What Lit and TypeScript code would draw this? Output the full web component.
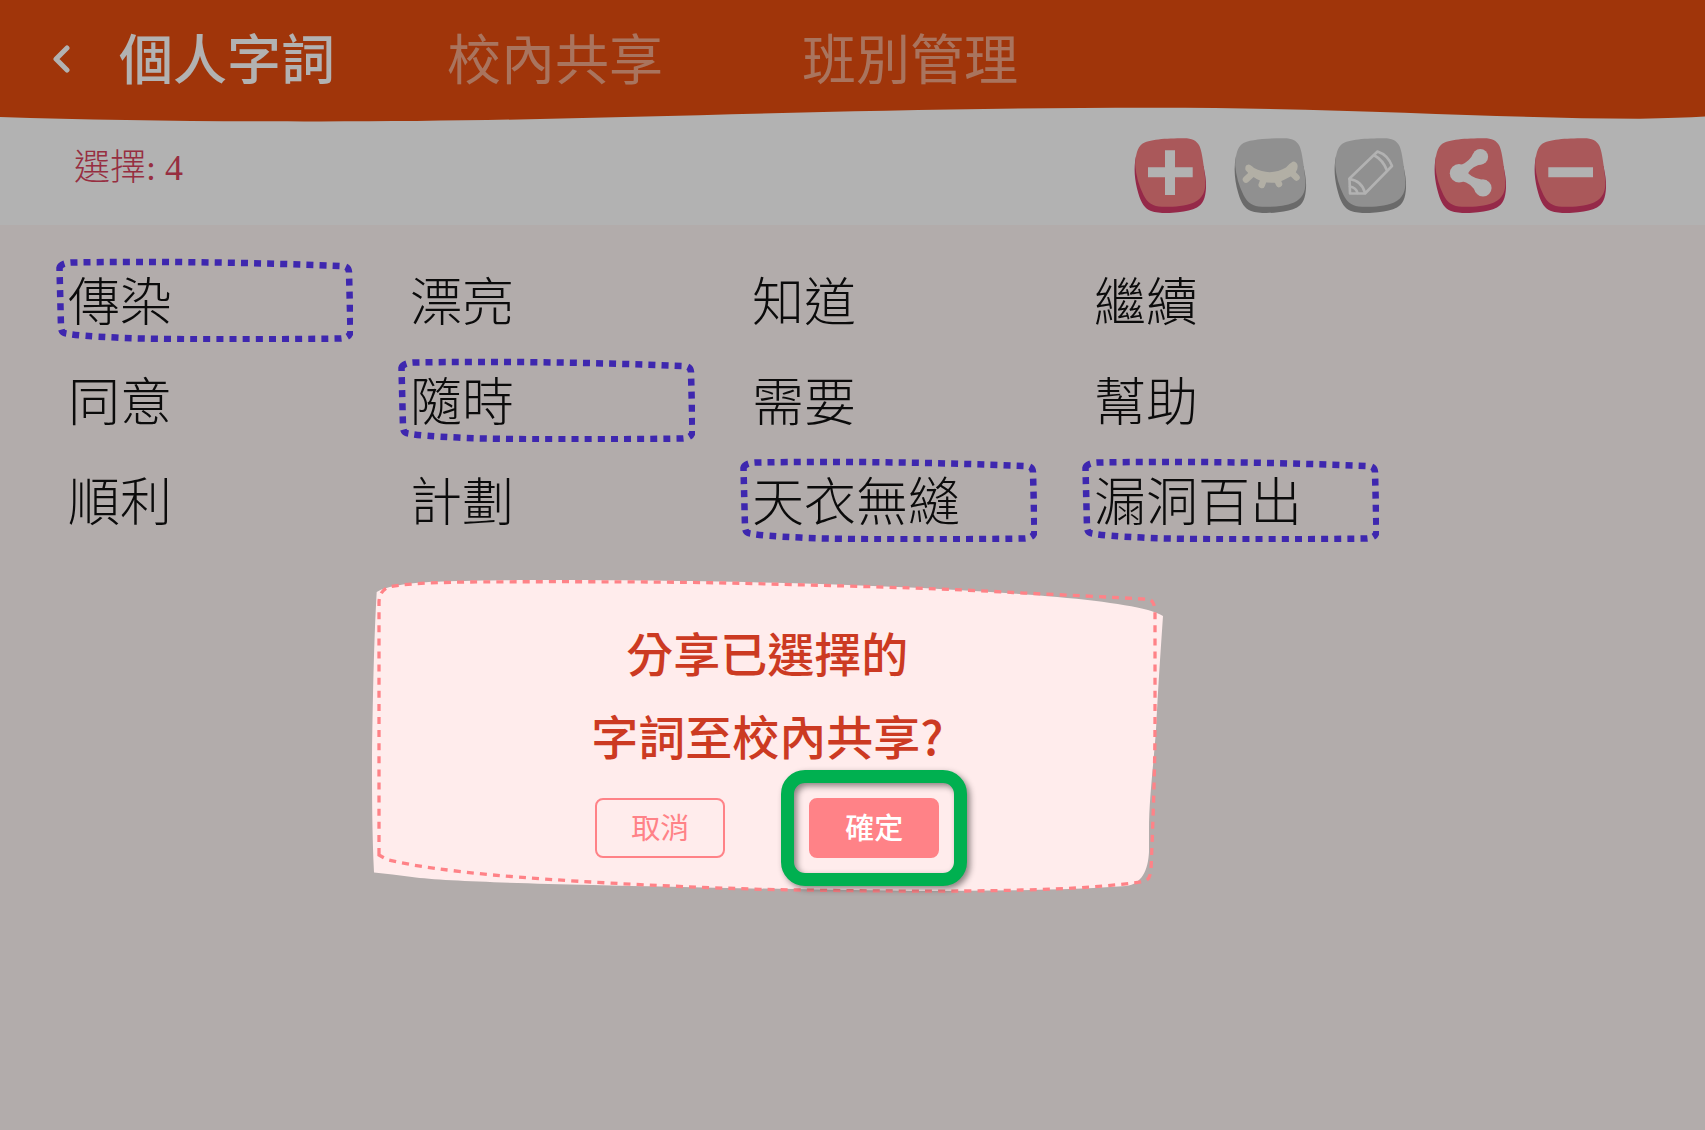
import { LitElement, html, svg, css, nothing, type TemplateResult } from "lit";
import { customElement, property, state } from "lit/decorators.js";

type ToolName = "add" | "hide" | "edit" | "share" | "remove";

interface Tool {
  name: ToolName;
  label: string;
  enabled: boolean;
}

const TABS = ["個人字詞", "校內共享", "班別管理"];

const TOOLS: Tool[] = [
  { name: "add", label: "新增", enabled: true },
  { name: "hide", label: "隱藏", enabled: false },
  { name: "edit", label: "編輯", enabled: false },
  { name: "share", label: "分享", enabled: true },
  { name: "remove", label: "刪除", enabled: true },
];

const WORDS = [
  "傳染", "漂亮", "知道", "繼續",
  "同意", "隨時", "需要", "幫助",
  "順利", "計劃", "天衣無縫", "漏洞百出",
];

const GLYPHS: Record<ToolName, TemplateResult> = {
  add: svg`<path fill="#fff" d="M31 12.3h10v17h17.7v10H41V57H31V39.3H14v-10h17z"/>`,
  hide: svg`<g fill="none" stroke="#fffbed" stroke-width="6.5" stroke-linecap="round">
    <path fill="#fffbed" stroke="none" d="M11.500 32Q10.500 27 14.500 26.500Q16.500 26.500 20 30Q36 38.500 52 29.500Q56 25 59 23.500Q63 23.500 63.700 28Q63.700 34 57.500 38Q50 42 44 44.500Q36 45.500 28 43.500Q17 39 11.500 32Z"/>
    <path d="M18 36L12 41.500M30 41L27.700 47M43 41.500L45 46M57 34L62.500 39.500"/>
  </g>`,
  edit: svg`<g fill="none" stroke="#fff" stroke-width="2.6" stroke-linejoin="round" stroke-linecap="round">
    <path d="M15.500 40.500L43.500 13.500Q54 17 58 28L31 55.500H16Z"/>
    <path d="M40.500 17.500Q49 22 53 32.500M15.500 41Q28 43 31 55M16 48.500Q22 49.500 23.500 55"/>
  </g>`,
  share: svg`<g fill="#fff">
    <circle cx="25" cy="35.300" r="9.200"/><circle cx="46.300" cy="18.700" r="7.800"/><circle cx="49" cy="50" r="8.600"/>
    <path d="M27 27Q36 23 39 16L49 26Q38 28 34 35.300Q41 42 53 42L42 55Q38 45 27 43Z"/>
  </g>`,
  remove: svg`<path fill="#fff" d="M14.300 29.300H59v10H14.300z"/>`,
};

@customElement("tool-button")
export class ToolButton extends LitElement {
  @property({ attribute: false }) tool!: Tool;

  static styles = css`
    :host {
      display: block;
    }
    .tool {
      display: block;
      padding: 0;
      border: 0;
      background: none;
      cursor: pointer;
    }
    .tool:disabled {
      cursor: default;
    }
    .art {
      display: block;
      width: 72px;
      height: 75px;
      overflow: visible;
    }
    .side {
      fill: #d63b69;
    }
    .face {
      fill: #f47e82;
    }
    .tool:disabled .side {
      fill: #999;
    }
    .tool:disabled .face {
      fill: #cfcfcf;
    }
  `;

  render() {
    return html`<button class="tool" type="button" aria-label=${this.tool.label} ?disabled=${!this.tool.enabled}>
      <svg class="art" viewBox="0 0 72 75" aria-hidden="true">
        <path class="side" d="M2 18C-.5 30 .5 42 4.300 55.300C7 65 11 71 17 73C24 75.500 36 75.300 44 74.300C52 73.300 58 72 63 69.500C69 66 71.500 60 72 50C72.500 42 71 36 69.500 28Z"/>
        <path class="face" d="M1.200 27C1.500 17 3.500 9.500 8 6C14 1.500 32 .3 50 .3C58 .3 62.500 2.500 65.500 8C68.500 15 70 30 71.300 42C72 53 69 60 60 64.500C50 68.500 38 69 28 68.800C19 68.500 13.500 65 9.500 57C5 48 2 38 1.200 27Z"/>
        ${GLYPHS[this.tool.name]}
      </svg>
    </button>`;
  }
}

@customElement("word-card")
export class WordCard extends LitElement {
  @property() word = "";
  @property({ type: Boolean }) selected = false;

  static styles = css`
    :host {
      display: block;
    }
    .word {
      position: relative;
      display: flex;
      align-items: center;
      width: 100%;
      height: 84px;
      padding: 0 12px 2px;
      border: 0;
      background: none;
      color: #111;
      font: 300 52px/76px "Noto Sans CJK TC", sans-serif;
      white-space: nowrap;
      cursor: pointer;
    }
    .frame {
      position: absolute;
      inset: 0;
      width: 100%;
      height: 100%;
      fill: none;
      stroke: #5a39fb;
      stroke-width: 6.5;
      stroke-dasharray: 7 6.1;
    }
  `;

  render() {
    return html`<button class="word" type="button" aria-pressed=${this.selected ? "true" : "false"}>
      ${this.selected
        ? html`<svg class="frame" viewBox="0 0 297 84" preserveAspectRatio="none" aria-hidden="true">
            <path d="M3.500 10Q4.500 5 16 4.500C100 3 200 4.500 286 8Q292.500 8 293 14L294.500 73Q294.500 80 284 80.500C220 81.500 100 82 60 79.500Q24 78 10 75.500Q5 75 5 69Z"/>
          </svg>`
        : nothing}
      <span>${this.word}</span>
    </button>`;
  }
}

@customElement("share-dialog")
export class ShareDialog extends LitElement {
  static styles = css`
    :host {
      display: block;
      font-family: "Noto Sans CJK TC", sans-serif;
    }
    .dialog {
      position: relative;
      display: flex;
      flex-direction: column;
      align-items: center;
      gap: 22px;
      padding: 30px 40px 34px;
    }
    .paper {
      position: absolute;
      inset: 0;
      width: 100%;
      height: 100%;
      overflow: visible;
    }
    .message {
      position: relative;
      margin: 0;
      color: #cc3a22;
      font-size: 47px;
      font-weight: 500;
      line-height: 83px;
      text-align: center;
    }
    .actions {
      position: relative;
      display: flex;
      gap: 84px;
    }
    .action {
      position: relative;
      width: 130px;
      height: 60px;
      padding: 0 0 4px;
      border: 2px solid #ff8287;
      border-radius: 8px;
      background: none;
      color: #ff8287;
      font: 400 29px/52px "Noto Sans CJK TC", sans-serif;
      cursor: pointer;
    }
    .confirm {
      background: #ff8287;
      color: #fff;
      font-weight: 500;
    }
    .ring {
      position: absolute;
      inset: -30px;
      border: 13px solid #00b050;
      border-radius: 24px;
      filter: drop-shadow(3px 3px 3px rgba(0, 0, 0, 0.45));
      pointer-events: none;
    }
  `;

  render() {
    return html`<section class="dialog" role="dialog" aria-modal="true" aria-labelledby="message">
      <svg class="paper" viewBox="0 0 791 312" preserveAspectRatio="none" aria-hidden="true">
        <path
          fill="#ffecec"
          d="M4.700 12C14 6 40 2 71 1.500C130 -.5 250 -.5 388 2.500C480 4.500 560 8 641 13.500C700 17.500 750 23 776 30Q786 33 791 36C788 80 786 110 784 150C781 190 777 220 777 250V272C776 290 770 304 754 306C700 310 620 311 540 311C400 309 300 307 221 305C140 303 70 301 40 297Q20 294 2 292.500C0 250 0 210 0 177C1 110 2 60 4.700 12Z"/>
        <path
          fill="none"
          stroke="#ff8287"
          stroke-width="3.3"
          stroke-dasharray="7 6.1"
          d="M7 275V23Q7 10 18 6.700C40 2.500 80 2 130 1.800C250 1.500 330 2 408 4.300C500 6.500 580 9 641 12.500C690 15 740 17 778 19.500Q783 22 783 32V140C783 190 781 240 779 290Q778 300 772 301.500C740 306 700 309 650 310C580 312 480 311 388 309.300C280 306 190 301 121 295C80 291 40 286 15 279.500Z"/>
      </svg>
      <p class="message" id="message">分享已選擇的<br />字詞至校內共享?</p>
      <div class="actions">
        <button class="action" type="button">取消</button>
        <button class="action confirm" type="button">確定<span class="ring"></span></button>
      </div>
    </section>`;
  }
}

@customElement("app-root")
export class AppRoot extends LitElement {
  @state() private activeTab = 0;
  @state() private selected = new Set(["傳染", "隨時", "天衣無縫", "漏洞百出"]);

  static styles = css`
    :host {
      display: block;
      position: relative;
      min-height: 100vh;
      background: #fff6f5;
      font-family: "Noto Sans CJK TC", sans-serif;
    }
    .top {
      background: #fff;
    }
    .bar {
      display: flex;
      align-items: center;
      gap: 48px;
      height: 107px;
      padding: 0 51px;
      background: #e64d0f;
    }
    .back {
      display: block;
      padding: 0;
      border: 0;
      background: none;
      cursor: pointer;
    }
    .chevron {
      display: block;
      width: 20px;
      height: 30px;
      margin-top: 12px;
      fill: none;
      stroke: #fff;
      stroke-width: 5;
      stroke-linecap: round;
      stroke-linejoin: round;
    }
    .tabs {
      display: grid;
      grid-template-columns: 328px 355px auto;
      justify-items: start;
      padding-top: 6px;
    }
    .tab {
      padding: 0;
      border: 0;
      background: none;
      color: #fff;
      font: 400 54px/80px "Noto Sans CJK TC", sans-serif;
      opacity: 0.5;
      cursor: pointer;
    }
    .tab.active {
      font-weight: 500;
      opacity: 1;
    }
    .wave {
      display: block;
      width: 100%;
      height: 15px;
      fill: #e64d0f;
    }
    .toolbar {
      display: flex;
      justify-content: space-between;
      align-items: flex-start;
      padding: 16px 99px 12px 74px;
    }
    .count {
      margin: 0;
      color: #d8425c;
      font: 300 36px/60px "Liberation Serif", "Noto Sans CJK TC", serif;
    }
    .tools {
      display: flex;
      gap: 28px;
    }
    .words {
      display: grid;
      grid-template-columns: repeat(auto-fill, 297px);
      gap: 16px 45px;
      padding: 33px 40px 40px 56px;
    }
    .overlay {
      position: absolute;
      inset: 0;
      display: flex;
      justify-content: center;
      align-items: flex-start;
      padding: 580px 10% 0 0;
      box-sizing: border-box;
      background: rgba(0, 0, 0, 0.3);
    }
    .modal {
      flex: 0 1 791px;
    }
  `;

  render() {
    return html`
      <header class="top">
        <div class="bar">
          <button class="back" type="button" aria-label="返回">
            <svg class="chevron" viewBox="0 0 20 30" aria-hidden="true"><path d="M16 3L5 14L16 25"/></svg>
          </button>
          <nav class="tabs">
            ${TABS.map(
              (tab, i) => html`<button
                class=${i === this.activeTab ? "tab active" : "tab"}
                type="button"
                @click=${() => (this.activeTab = i)}
              >${tab}</button>`
            )}
          </nav>
        </div>
        <svg class="wave" viewBox="0 0 1705 15" preserveAspectRatio="none" aria-hidden="true">
          <path d="M0 0V10C100 13.500 220 14.500 320 14.500C600 14.500 820 1 1150 .7C1350 .5 1500 11.800 1640 11.700Q1680 11 1705 9.500V0Z"/>
        </svg>
        <div class="toolbar">
          <p class="count">選擇: ${this.selected.size}</p>
          <div class="tools">${TOOLS.map((tool) => html`<tool-button .tool=${tool}></tool-button>`)}</div>
        </div>
      </header>
      <main class="words">
        ${WORDS.map((word) => html`<word-card .word=${word} .selected=${this.selected.has(word)}></word-card>`)}
      </main>
      <div class="overlay"><share-dialog class="modal"></share-dialog></div>
    `;
  }
}
